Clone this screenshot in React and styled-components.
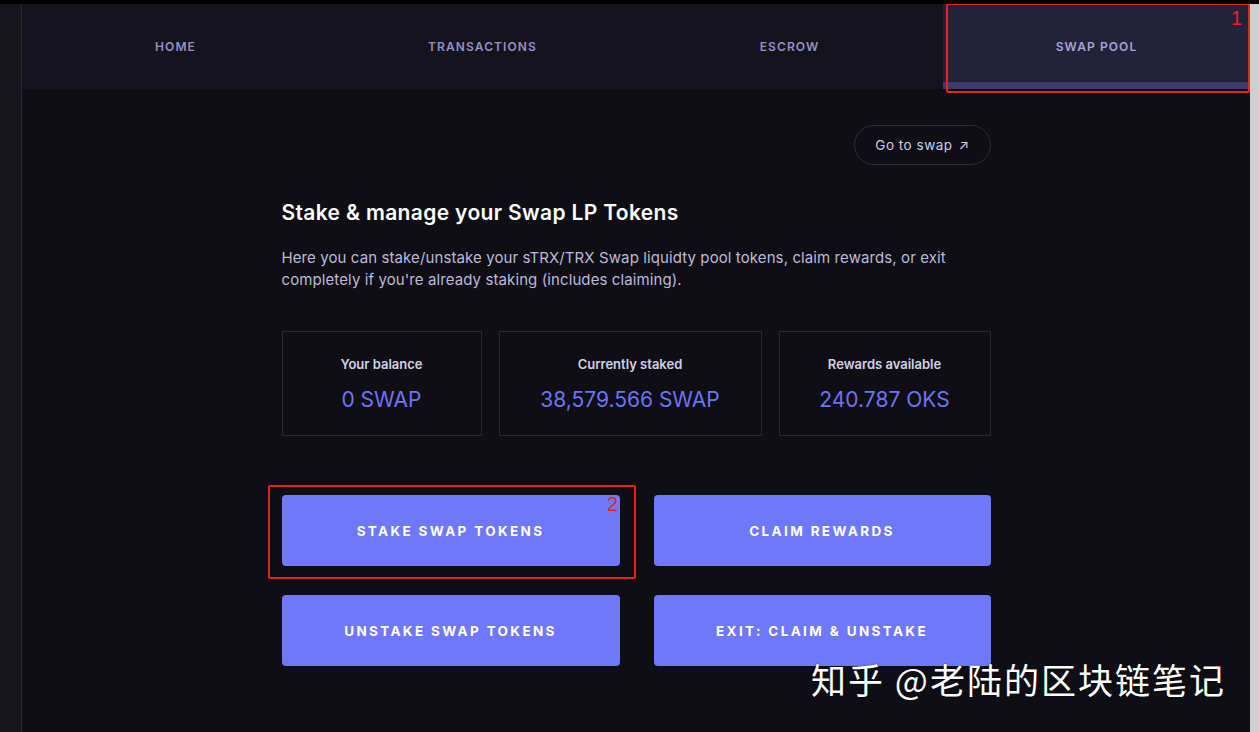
import React from 'react'
import styled, { createGlobalStyle } from 'styled-components'

const GlobalStyle = createGlobalStyle`
  html, body {
    margin: 0;
    padding: 0;
    background: #0f0e14;
  }
  * { box-sizing: border-box; }
`

const Frame = styled.div`
  display: flex;
  height: 732px;
  border-top: 4px solid #000;
  position: relative;
  overflow: hidden;
  font-family: Inter, "Noto Sans", sans-serif;
`

const SideRail = styled.div`
  width: 22px;
  background: #17161e;
  border-right: 1px solid #2b2938;
`

const Main = styled.main`
  flex: 1;
  background: #0f0e14;
`

const EdgeStrip = styled.div`
  width: 9px;
  background: #cfcfd1;
`

const Nav = styled.nav`
  display: grid;
  grid-template-columns: repeat(4, 1fr);
  height: 85px;
  background: #15131e;
`

const Tab = styled.div`
  display: flex;
  align-items: center;
  justify-content: center;
  padding-top: ${p => (p.$active ? '7px' : '0')};
  font-size: 12px;
  font-weight: 600;
  letter-spacing: 1.1px;
  color: ${p => (p.$active ? '#a7a4d6' : '#9491c4')};
  background: ${p => (p.$active ? '#24223a' : 'transparent')};
  border-bottom: ${p => (p.$active ? '7px solid #3d3b6c' : 'none')};
`

const Content = styled.section`
  width: 709px;
  margin: 0 auto;
  padding-top: 36px;
  display: flex;
  flex-direction: column;
`

const TopRow = styled.div`
  display: flex;
  justify-content: flex-end;
`

const SwapLink = styled.a`
  display: inline-flex;
  align-items: center;
  gap: 6px;
  height: 40px;
  padding: 0 20px;
  border: 1px solid #2e2c3c;
  border-radius: 20px;
  color: #cfcde6;
  font-size: 13.5px;
  letter-spacing: 0.5px;
  text-decoration: none;
`

const Title = styled.h1`
  margin: 35px 0 0;
  font-size: 21px;
  font-weight: 600;
  color: #ffffff;
  letter-spacing: 0.35px;
`

const Lead = styled.p`
  margin: 22px 0 0;
  max-width: 690px;
  font-size: 15px;
  line-height: 22px;
  color: #bdbadb;
  letter-spacing: 0.1px;
`

const Stats = styled.div`
  display: grid;
  grid-template-columns: 200px 263px 212px;
  gap: 17px;
  margin-top: 40px;
`

const StatCard = styled.div`
  height: 105px;
  border: 1px solid #2a2837;
  display: flex;
  flex-direction: column;
  align-items: center;
  justify-content: center;
  gap: 15px;
`

const StatLabel = styled.div`
  font-size: 13px;
  font-weight: 600;
  color: #d3d1e8;
`

const StatValue = styled.div`
  font-size: 21px;
  color: #6f73f2;
`

const Actions = styled.div`
  display: grid;
  grid-template-columns: 338px 337px;
  column-gap: 34px;
  row-gap: 29px;
  margin-top: 59px;
`

const ActionButton = styled.button`
  height: 71px;
  border: none;
  border-radius: 4px;
  background: #6f78f9;
  color: #ffffff;
  font-family: Inter, "Noto Sans", sans-serif;
  font-size: 13.5px;
  font-weight: 700;
  letter-spacing: 2.35px;
  text-transform: uppercase;
`

const Marker = styled.div`
  position: absolute;
  border: 2.5px solid #e1251f;
  border-radius: 2px;
  pointer-events: none;
`

const MarkerNumber = styled.span`
  position: absolute;
  top: 2px;
  right: 6px;
  font-family: "Liberation Sans", sans-serif;
  font-size: 20px;
  color: #e1251f;
`

const Watermark = styled.div`
  position: absolute;
  left: 811px;
  top: 649px;
  font-family: "Noto Sans CJK SC", "Noto Sans", sans-serif;
  font-size: 35px;
  color: #ffffff;
  letter-spacing: 2px;
  text-shadow: 0 0 2px rgba(0, 0, 0, 0.6);
`

const tabs = ['Home', 'Transactions', 'Escrow', 'Swap pool']

const stats = [
  { label: 'Your balance', value: '0 SWAP' },
  { label: 'Currently staked', value: '38,579.566 SWAP' },
  { label: 'Rewards available', value: '240.787 OKS' },
]

const actions = ['Stake swap tokens', 'Claim rewards', 'Unstake swap tokens', 'Exit: claim & unstake']

const App = () => {
  return (
    <>
      <GlobalStyle />
      <Frame>
        <SideRail />
        <Main>
          <Nav>
            {tabs.map((t, i) => (
              <Tab key={t} $active={i === 3}>{t.toUpperCase()}</Tab>
            ))}
          </Nav>
          <Content>
            <TopRow>
              <SwapLink href="#">Go to swap <span>↗</span></SwapLink>
            </TopRow>
            <Title>Stake &amp; manage your Swap LP Tokens</Title>
            <Lead>
              Here you can stake/unstake your sTRX/TRX Swap liquidty pool tokens, claim rewards, or exit
              completely if you're already staking (includes claiming).
            </Lead>
            <Stats>
              {stats.map(s => (
                <StatCard key={s.label}>
                  <StatLabel>{s.label}</StatLabel>
                  <StatValue>{s.value}</StatValue>
                </StatCard>
              ))}
            </Stats>
            <Actions>
              {actions.map(a => (
                <ActionButton key={a}>{a}</ActionButton>
              ))}
            </Actions>
          </Content>
        </Main>
        <EdgeStrip />

        <Marker style={{ left: 946, top: -1, width: 304, height: 90 }}>
          <MarkerNumber>1</MarkerNumber>
        </Marker>
        <Marker style={{ left: 268, top: 481, width: 368, height: 94 }}>
          <MarkerNumber style={{ top: 6, right: 16 }}>2</MarkerNumber>
        </Marker>
        <Watermark>知乎 @老陆的区块链笔记</Watermark>
      </Frame>
    </>
  )
}

export default App
